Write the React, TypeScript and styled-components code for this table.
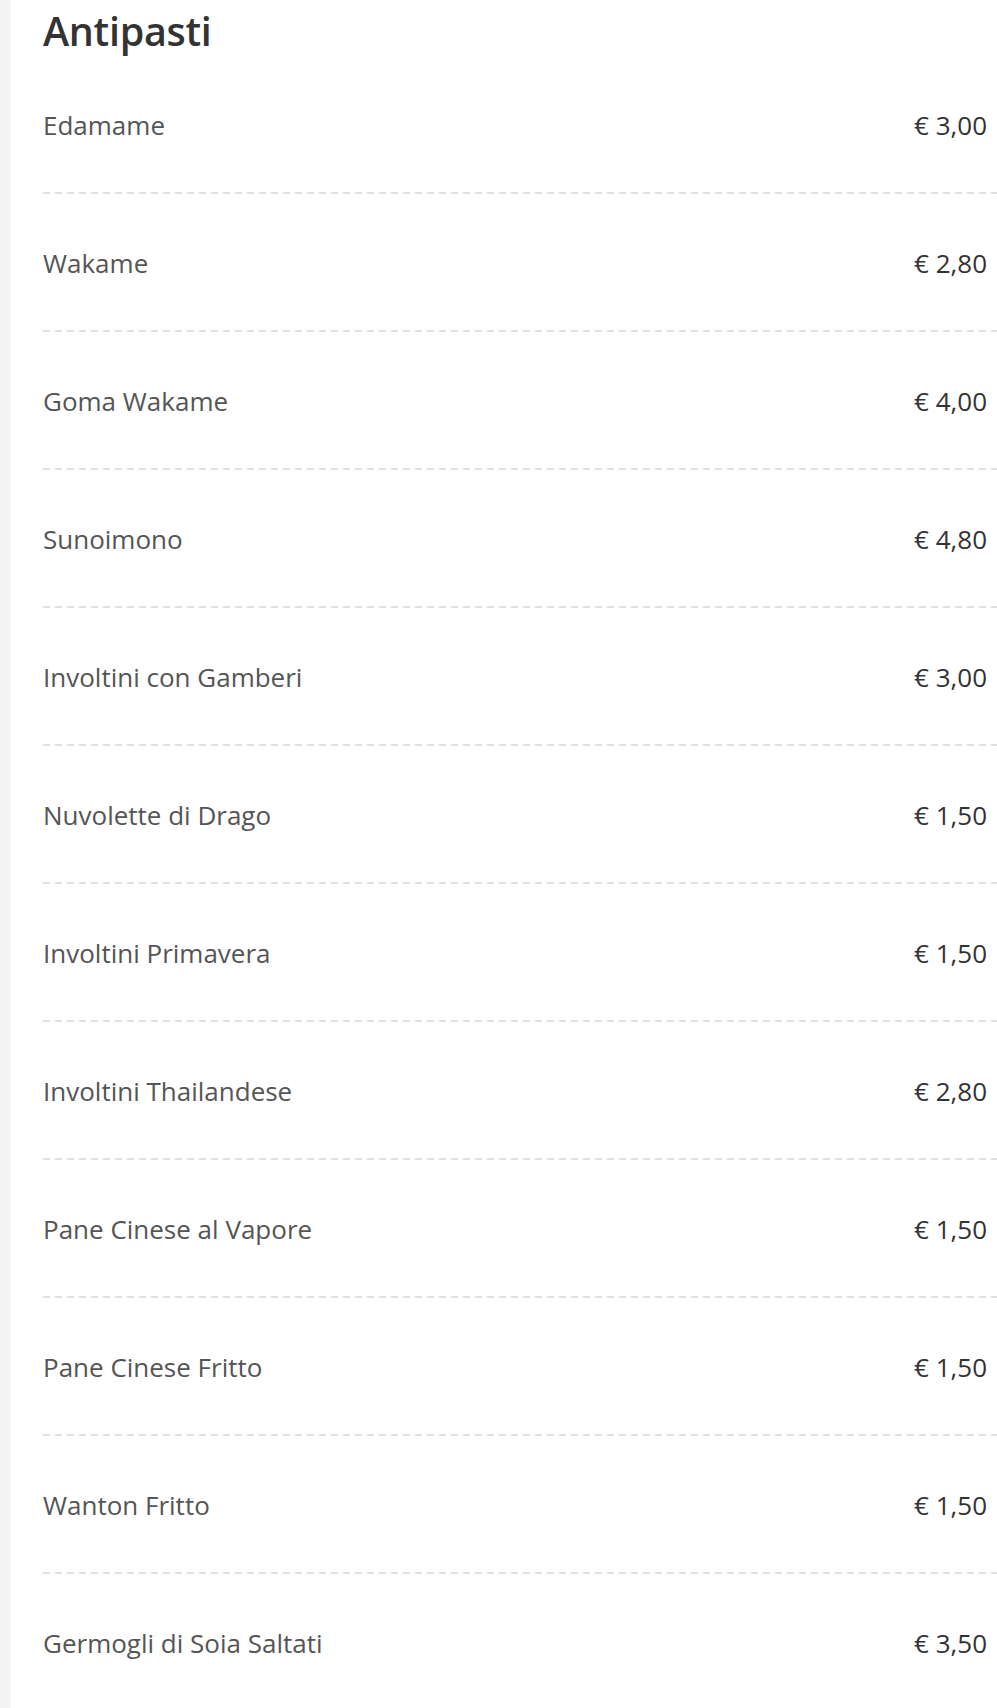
import React from "react";
import styled, { createGlobalStyle } from "styled-components";

const Global = createGlobalStyle`
  html, body { margin: 0; padding: 0; background: #ffffff; }
  body { font-family: "Open Sans", "Noto Sans", sans-serif; }
`;

const Page = styled.div`
  display: grid;
  grid-template-columns: 11px 1fr;
  min-height: 1708px;
`;

const Side = styled.div`
  background: #f4f4f4;
`;

const Main = styled.main`
  padding-left: 32px;
  display: flex;
  flex-direction: column;
`;

const Title = styled.h2`
  margin: 0;
  padding-top: 6px;
  height: 50px;
  line-height: 50px;
  font-size: 39.5px;
  font-weight: 600;
  color: #333333;
  letter-spacing: -0.3px;
`;

const List = styled.ul`
  list-style: none;
  margin: 0;
  padding: 0;
`;

const Row = styled.li`
  display: flex;
  align-items: center;
  justify-content: space-between;
  height: 138px;
  box-sizing: border-box;
  padding: 0 10px 0 0;
  background: linear-gradient(to right, #e0e0e0 7px, transparent 7px) left bottom / 12px 2px repeat-x;
`;

const Name = styled.span`
  font-size: 26px;
  font-weight: 500;
  color: #555555;
`;

const Price = styled.span`
  font-size: 26px;
  font-weight: 500;
  color: #333333;
`;

const items: [string, string][] = [
  ["Edamame", "€ 3,00"],
  ["Wakame", "€ 2,80"],
  ["Goma Wakame", "€ 4,00"],
  ["Sunoimono", "€ 4,80"],
  ["Involtini con Gamberi", "€ 3,00"],
  ["Nuvolette di Drago", "€ 1,50"],
  ["Involtini Primavera", "€ 1,50"],
  ["Involtini Thailandese", "€ 2,80"],
  ["Pane Cinese al Vapore", "€ 1,50"],
  ["Pane Cinese Fritto", "€ 1,50"],
  ["Wanton Fritto", "€ 1,50"],
  ["Germogli di Soia Saltati", "€ 3,50"],
];

export default function App() {
  return (
    <>
      <Global />
      <Page>
        <Side />
        <Main>
          <Title>Antipasti</Title>
          <List>
            {items.map(([n, p]) => (
              <Row key={n}>
                <Name>{n}</Name>
                <Price>{p}</Price>
              </Row>
            ))}
          </List>
        </Main>
      </Page>
    </>
  );
}
